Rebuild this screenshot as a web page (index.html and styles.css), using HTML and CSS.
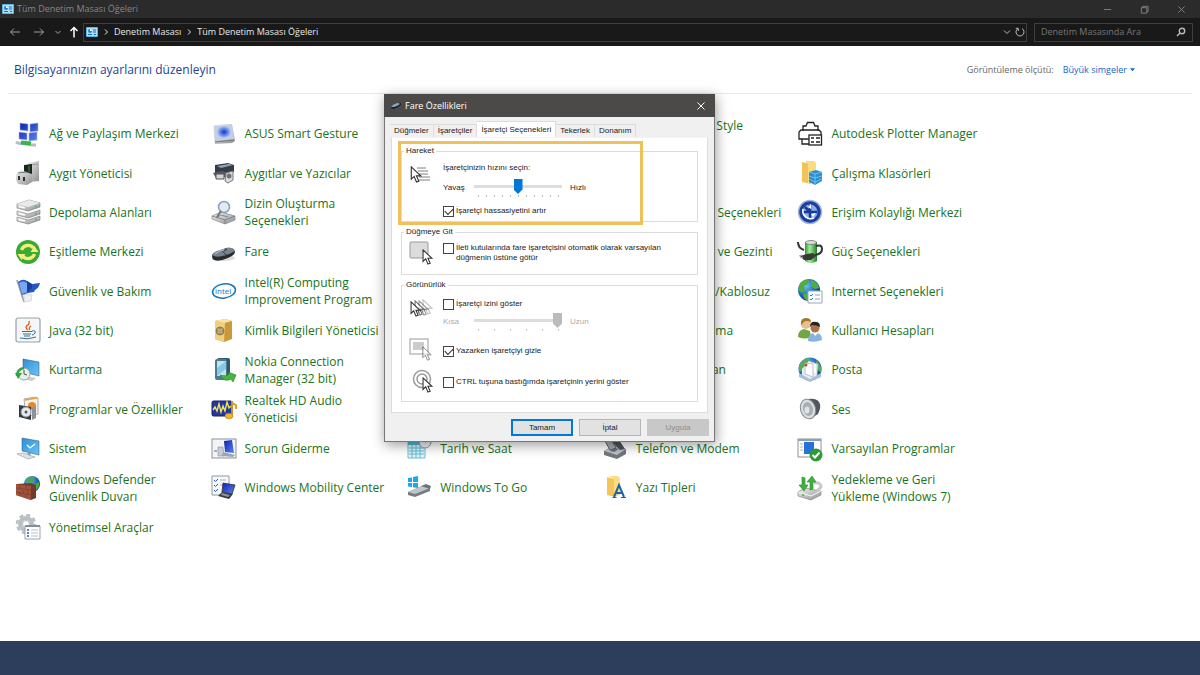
FILE: index.html
```html
<!DOCTYPE html>
<html lang="tr">
<head>
<meta charset="utf-8">
<meta name="viewport" content="width=device-width, initial-scale=1">
<title>Tüm Denetim Masası Öğeleri</title>
<link rel="stylesheet" href="styles.css">
</head>
<body>
<svg class="defs" aria-hidden="true">
  <defs>
    <linearGradient id="metal" x1="0" y1="0" x2="1" y2="1"><stop offset="0" stop-color="#f4f4f4"/><stop offset="1" stop-color="#8d8f92"/></linearGradient>
    <linearGradient id="screen" x1="0" y1="0" x2="1" y2="1"><stop offset="0" stop-color="#2d8fd8"/><stop offset="1" stop-color="#6cc5f5"/></linearGradient>
    <linearGradient id="navy" x1="0" y1="0" x2="1" y2="1"><stop offset="0" stop-color="#0a1fb0"/><stop offset="1" stop-color="#5d86ee"/></linearGradient>
    <radialGradient id="globe" cx=".35" cy=".3" r=".8"><stop offset="0" stop-color="#6fc3f5"/><stop offset=".6" stop-color="#1c62b8"/><stop offset="1" stop-color="#0b2c6e"/></radialGradient>
    <radialGradient id="glow"><stop offset="0" stop-color="#0b35d8"/><stop offset=".35" stop-color="#3f6ae4"/><stop offset="1" stop-color="#b9c8ea"/></radialGradient>
    <linearGradient id="leaf" x1="0" y1="0" x2="1" y2="0"><stop offset="0" stop-color="#2a9a32"/><stop offset=".4" stop-color="#a5ec9b"/><stop offset="1" stop-color="#1b7a26"/></linearGradient>
    <symbol id="panel" viewBox="0 0 12 10"><rect width="12" height="10" rx="1" fill="#5bb7ea"/><rect x="1" y="1" width="10" height="8" fill="#a9defa"/><circle cx="4" cy="4" r="2" fill="#2a7fc4"/><path d="M4 4V2a2 2 0 0 1 2 2z" fill="#fff"/><path d="M7 3h3M7 5h3M2 7.5h4M8 7.5h2" stroke="#1e6fb5"/></symbol>
    <symbol id="arrow" viewBox="0 0 12 18"><path d="M1 1v13l3-3 2.500 6 2.500-1-2.500-5.500H11z" fill="#fff" stroke="#333" stroke-width="1.200"/></symbol>
  </defs>
</svg>

<header class="chrome">
  <div class="titlebar">
    <svg class="panel-icon"><use href="#panel"/></svg>
    <h1>Tüm Denetim Masası Öğeleri</h1>
    <div class="caption-buttons">
      <button type="button" aria-label="Simge durumuna küçült"><svg viewBox="0 0 10 10"><path d="M1 5h8"/></svg></button>
      <button type="button" aria-label="Önceki boyut"><svg viewBox="0 0 10 10"><path d="M1.500 3h6v6h-6zM3 3V1.500h6v6H7.500"/></svg></button>
      <button type="button" aria-label="Kapat"><svg viewBox="0 0 10 10"><path d="M1.500 1.500l7 7M8.500 1.500l-7 7"/></svg></button>
    </div>
  </div>
  <nav class="navbar">
    <button class="nav-arrow" type="button" aria-label="Geri"><svg viewBox="0 0 12 12"><path d="M11 6H1.500M5 2.500L1.500 6 5 9.500"/></svg></button>
    <button class="nav-arrow" type="button" aria-label="İleri"><svg viewBox="0 0 12 12"><path d="M1 6h9.500M7 2.500L10.500 6 7 9.500"/></svg></button>
    <button class="nav-recent" type="button" aria-label="Son konumlar"><svg viewBox="0 0 8 8"><path d="M1.500 3L4 5.500 6.500 3"/></svg></button>
    <button class="nav-up" type="button" aria-label="Yukarı"><svg viewBox="0 0 12 12"><path d="M6 11.500V1.500M2.500 5L6 1.500 9.500 5"/></svg></button>
    <div class="address">
      <svg class="panel-icon"><use href="#panel"/></svg>
      <svg class="crumb" viewBox="0 0 6 8"><path d="M2 1.500L4.500 4 2 6.500"/></svg>
      <a href="#">Denetim Masası</a>
      <svg class="crumb" viewBox="0 0 6 8"><path d="M2 1.500L4.500 4 2 6.500"/></svg>
      <a href="#">Tüm Denetim Masası Öğeleri</a>
      <span class="address-tools">
        <button type="button" aria-label="Adres listesi"><svg viewBox="0 0 10 10"><path d="M2 3.500L5 6.500 8 3.500"/></svg></button>
        <button type="button" aria-label="Yenile"><svg viewBox="0 0 10 10"><path d="M7 1.500A4 4 0 1 1 3 1.500M3.300 4V1.300H.800"/></svg></button>
      </span>
    </div>
    <div class="search">
      <input type="text" aria-label="Denetim Masasında Ara" placeholder="Denetim Masasında Ara">
      <svg viewBox="0 0 10 10"><circle cx="6" cy="4" r="2.700"/><path d="M4 6L1 9"/></svg>
    </div>
  </nav>
</header>

<main>
  <div class="heading">
    <h2>Bilgisayarınızın ayarlarını düzenleyin</h2>
    <p>Görüntüleme ölçütü:</p>
    <button type="button">Büyük simgeler <svg viewBox="0 0 6 4"><path d="M0 0h6L3 3.500z"/></svg></button>
  </div>

  <ul class="items">
    <li><a href="#"><svg viewBox="0 0 26 26"><g fill="url(#navy)" stroke="#a9b8dd" stroke-width=".6"><path d="M5 2l8 1v7l-8-1zM15 3l8-1v8l-8 1zM4 11l8 1v7l-8-1zM14 12l8-1v8l-8 1z"/></g><path d="M1 21q3 2 7 1.500l9 1.500 4 0" stroke="#b9bec6" stroke-width="3" fill="none"/><path d="M6 21.500l10 1" stroke="#39b54a" stroke-width="4"/></svg><span>Ağ ve Paylaşım Merkezi</span></a></li>
    <li><a href="#"><svg viewBox="0 0 26 26"><path d="M2 4l19-1 3 17-3 2-17 1z" fill="url(#metal)"/><path d="M3 5l18-1 2 14-18 2z" fill="#c3cfe8"/><ellipse cx="13" cy="11" rx="7" ry="6" fill="url(#glow)"/><path d="M4 21l19-2" stroke="#777"/></svg><span>ASUS Smart Gesture</span></a></li>
    <li class="col-4"><a href="#"><span>Autodesk Plot Style Manager</span></a></li>
    <li><a href="#"><svg viewBox="0 0 26 26" fill="#fff" stroke="#222" stroke-width="1.300"><path d="M6 10V5h3l1.500-3.500h6L18 5h3v5M2 11l2-2h18l2 2v7H2zM5 18v5h8"/><rect x="12" y="14" width="12.500" height="10"/><path d="M14 17h3M19 17h4M14 21h3M19 21h4"/></svg><span>Autodesk Plotter Manager</span></a></li>

    <li><a href="#"><svg viewBox="0 0 26 26"><path d="M13 3l11-2v20l-9 1-4-5z" fill="url(#metal)"/><path d="M15 5l8-1" stroke="#999"/><path d="M9 5l8-1v10l-8 1z" fill="#1d2420"/><path d="M14 6v6" stroke="#3a9b55"/><path d="M1 14l5-4 5 2 6 2v8l-5 3-9-1-2-4z" fill="url(#metal)"/><path d="M4 16v4M9 17v4" stroke="#222" stroke-width="1.800"/><path d="M3 13l9-1" stroke="#777"/></svg><span>Aygıt Yöneticisi</span></a></li>
    <li><a href="#"><svg viewBox="0 0 26 26"><path d="M4 5l13-2 6 2v7l-15 3-4-2z" fill="#363c43"/><path d="M6 6l12-2 4 1-12 3z" fill="#8fa2b5"/><path d="M2 13l9-2 6 2-3 4-9 1z" fill="#555b62"/><path d="M5 14h8v5H5z" fill="#d4d7da" stroke="#555"/><path d="M15 13l7-2v9l-5 3-3-2z" fill="#dadcdf" stroke="#777"/><circle cx="18" cy="16" r="2.500" fill="#6d747c"/></svg><span>Aygıtlar ve Yazıcılar</span></a></li>
    <li class="col-5"><a href="#"><svg viewBox="0 0 26 26"><path d="M5 2l9 2v20l-9-2z" fill="#f0c45a"/><path d="M8 1h9l2 2v18l-8 2V4z" fill="#fbdc82"/><path d="M12 12l7-2 6 2v9l-7 4-6-3z" fill="#2b8fd0"/><path d="M12 12l6 2 7-2M18 14v11M12 16l6 2 7-2M12 19l6 3 7-3" stroke="#8fd0f4" stroke-width=".7" fill="none"/></svg><span>Çalışma Klasörleri</span></a></li>

    <li><a href="#"><svg viewBox="0 0 26 26"><path d="M2 5l12-4 11 3v4L13 12 2 9z" fill="url(#metal)" stroke="#777" stroke-width=".6"/><path d="M2 5l11 3 12-4-11-3z" fill="#e9e9e9"/><path d="M2 12l11 3 12-4v4l-12 4-11-3z" fill="url(#metal)" stroke="#777" stroke-width=".6"/><path d="M2 18l11 3 12-4v4l-12 4-11-3z" fill="url(#metal)" stroke="#777" stroke-width=".6"/><path d="M4 7.500l6 1.500M4 14.500l6 1.500M4 20.500l6 1.500" stroke="#fff" stroke-width="1.300"/><circle cx="21" cy="7.500" r="1" fill="#5bb85e"/><circle cx="21" cy="14.500" r="1" fill="#5bb85e"/><circle cx="21" cy="20.500" r="1" fill="#5bb85e"/></svg><span>Depolama Alanları</span></a></li>
    <li><a href="#"><svg viewBox="0 0 26 26"><path d="M1 17l9-4 14 4v4l-10 4L1 20z" fill="url(#metal)" stroke="#85888b" stroke-width=".7"/><path d="M1 17l13 4 10-4M14 21v4M5 19l5-3 7 2" stroke="#777" fill="none" stroke-width=".8"/><circle cx="13" cy="8" r="5.500" fill="#dcecf8" stroke="#8ba0b4" stroke-width="1.500"/><path d="M10 12l-4 6" stroke="#777" stroke-width="2"/></svg><span>Dizin Oluşturma Seçenekleri</span></a></li>
    <li class="col-4"><a href="#"><span>Dosya Gezgini Seçenekleri</span></a></li>
    <li><a href="#"><svg viewBox="0 0 26 26"><circle cx="13" cy="13" r="11.500" fill="#1b3f9f" stroke="#a4b6dc" stroke-width="1.500"/><circle cx="13" cy="13" r="7.500" fill="#8fb0ea"/><path d="M13 6v7h7M6 13h7v7M8 8l5 5" stroke="#173a94" stroke-width="2.500" fill="none"/><path d="M14 5l-3 3 3 2zM19 14l-3 4-2-3z" fill="#fff"/><path d="M6 10a8 8 0 0 0 11 9" stroke="#fff" stroke-width="1.600" fill="none"/></svg><span>Erişim Kolaylığı Merkezi</span></a></li>

    <li><a href="#"><svg viewBox="0 0 26 26"><circle cx="13" cy="13" r="12" fill="#39ab35"/><path d="M6.500 11a7 7 0 0 1 12-2M19.500 15a7 7 0 0 1-12 2" fill="none" stroke="#f4ee7c" stroke-width="3.400"/><path d="M15.500 12h8l-4-6zM10.500 14h-8l4 6z" fill="#f4ee7c" transform="translate(0 1)"/></svg><span>Eşitleme Merkezi</span></a></li>
    <li><a href="#"><svg viewBox="0 0 26 26"><ellipse cx="13" cy="19" rx="11" ry="3" fill="#ddd"/><path d="M1 17q0-3 7-5l7-3q8-1 9 4 0 3-7 6-9 4-14 2-2-1-2-4z" fill="#272c31"/><path d="M1 16q1-3 8-5l7-2q6-1 8 3-6 4-13 5-6 2-10-1z" fill="#778490"/><path d="M10 11q4 3 5 5M13 12l3-2" stroke="#2c3339" fill="none"/><path d="M4 15q5-4 9-4" stroke="#b9c4cd" fill="none"/></svg><span>Fare</span></a></li>
    <li class="col-4 tucked"><a href="#"><span>ve Gezinti</span></a></li>
    <li><a href="#"><svg viewBox="0 0 26 26"><path d="M8 3q6-3 12 0v19q-6 4-12 0z" fill="url(#leaf)"/><ellipse cx="14" cy="3.500" rx="5.500" ry="2" fill="#d9dbd9" stroke="#697169" stroke-width=".7"/><path d="M1 3q0 6 6 8M19 7q6-2 6 3t-7 6" stroke="#333" stroke-width="2" fill="none"/><path d="M3 17l7-2 6-1 3 3-5 4-7 0z" fill="#3b3838"/><path d="M3 19l3-1M2 17l3-1" stroke="#aaa"/></svg><span>Güç Seçenekleri</span></a></li>

    <li><a href="#"><svg viewBox="0 0 26 26"><path d="M2 2l7 22" stroke="#a2a6aa" stroke-width="1.800"/><path d="M9 16l8 1-1 6-7 1z" fill="#eff0f2" stroke="#c3c5c8" stroke-width=".6"/><path d="M3 4q5-4 9-1t5 3l8-1q-1 5-5 7l-1 2-6 1-6 2z" fill="#2459c4"/><path d="M4 5q4-3 8 0l1 9-6 2z" fill="#7da6f0"/><path d="M12 3v12l5-5V6z" fill="#173f9c"/></svg><span>Güvenlik ve Bakım</span></a></li>
    <li><a href="#"><svg viewBox="0 0 26 26"><ellipse cx="13" cy="13" rx="11.500" ry="7" transform="rotate(-8 13 13)" fill="#fff" stroke="#1675bd" stroke-width="1.500"/><text x="4" y="16" class="intel">intel</text></svg><span>Intel(R) Computing Improvement Program</span></a></li>
    <li class="col-4"><a href="#"><span>Intel® PROSet/Kablosuz</span></a></li>
    <li><a href="#"><svg viewBox="0 0 26 26"><circle cx="12" cy="12" r="11" fill="url(#globe)"/><path d="M3 5q5-4 9-3l-1 4-4 2 1 4-3 3-4-3zM14 2q7 1 8 8l-4 1-4-3zM6 16l5-1 2 4-2 4q-5-2-5-7z" fill="#4fae3e"/><path d="M11 13h14v12H11z" fill="#fff" stroke="#9aa6b2"/><path d="M13 17l1 1 2-2M13 21l1 1 2-2" stroke="#1d7bd0" fill="none"/><path d="M18 17h5M18 21h5" stroke="#8fa1b3"/></svg><span>Internet Seçenekleri</span></a></li>

    <li><a href="#"><svg viewBox="0 0 26 26"><rect x="1" y="1" width="24" height="24" rx="2" fill="#f5f6f7" stroke="#9aa1a8" stroke-width="1.200"/><path d="M13 13q-4-3 0-5 2-2 1-4M15 13q-2-2 1-4" stroke="#e8641b" stroke-width="1.400" fill="none"/><path d="M7 14.500h10M8 17h8M9 19h6M17 14q4-1 3 2-1 2-3 2M5 21q8 2 16-1" stroke="#3c6c97" stroke-width="1" fill="none"/></svg><span>Java (32 bit)</span></a></li>
    <li><a href="#"><svg viewBox="0 0 26 26"><path d="M4 4l10-2 7 2v18l-8 3-9-3z" fill="#c99a3c"/><path d="M4 4l10 2-1 19-9-3z" fill="#edcf7d"/><path d="M4 4l10-2 7 2-8 2z" fill="#f7e5a6"/><circle cx="9" cy="14" r="4" fill="#b6a069" stroke="#7b6733" stroke-width=".7"/><circle cx="9" cy="14" r="1.800" fill="#e9e6de"/><path d="M9 10v8M5 14h8" stroke="#7b6733" stroke-width=".6"/></svg><span>Kimlik Bilgileri Yöneticisi</span></a></li>
    <li class="col-4"><a href="#"><span>Konuşma Tanıma</span></a></li>
    <li><a href="#"><svg viewBox="0 0 26 26"><path d="M1 20q0-7 6-8l6 2 1 6q-6 3-13 0z" fill="#72a644"/><circle cx="9" cy="7" r="5" fill="#e9c08d"/><path d="M4 8q-1-7 5-7 5 0 5 4-5-2-7 0z" fill="#a7772f"/><path d="M11 24q0-7 5-8h5q4 2 4 7-7 3-14 1z" fill="#88b2df"/><path d="M16 16l2 3 3-3z" fill="#fff"/><circle cx="18" cy="11" r="4.500" fill="#ad7448"/><path d="M13 10q0-6 6-5 4 0 4 5-3-2-8-2z" fill="#2c2320"/></svg><span>Kullanıcı Hesapları</span></a></li>

    <li><a href="#"><svg viewBox="0 0 26 26"><path d="M8 2l16 3v14L8 15z" fill="url(#screen)" stroke="#37485a" stroke-width=".5"/><path d="M8 19l13 2-4 3-9-2z" fill="#c4cbd2"/><circle cx="9" cy="17" r="6" fill="#e8eeea" stroke="#9ba7a0"/><path d="M9 13v4l3 1" stroke="#555" fill="none"/><path d="M2 19q0-7 7-8" stroke="#2fa444" stroke-width="2.500" fill="none"/><path d="M0 16h7l-4 6z" fill="#2fa444"/></svg><span>Kurtarma</span></a></li>
    <li><a href="#"><svg viewBox="0 0 26 26"><rect x="6" y="1" width="13" height="22" rx="2" fill="#32596b"/><rect x="4" y="2" width="12" height="21" rx="2" fill="#507b8f"/><rect x="6" y="4" width="9" height="15" fill="#bde4f4"/><path d="M6 11l9-7v8l-9 7z" fill="#87c9e4"/><path d="M9 18q6 2 9-1l-1-2 8 3-3 7-2-3q-7 4-11-4z" fill="#48b63c" stroke="#27782a" stroke-width=".6"/></svg><span>Nokia Connection Manager (32 bit)</span></a></li>
    <li class="col-4"><a href="#"><span>Otomatik Kullan</span></a></li>
    <li><a href="#"><svg viewBox="0 0 26 26"><circle cx="13" cy="12" r="11.500" fill="url(#globe)"/><path d="M2 8q5-8 11-7l-3 5-4 7-4 2zM19 3q7 6 5 13l-4-4z" fill="#5aab58"/><path d="M5 12l7-8 9 3-1 12-6 6-9-4z" fill="#e8eef5"/><path d="M8 6l8 1v13l-8-3zM11 4l9 3v12" fill="#fff" stroke="#a4b5c8" stroke-width=".8"/><circle cx="9" cy="8" r="1.500" fill="#d44234"/><path d="M2 16l11 6 11-6v4l-11 5-11-5z" fill="#a8bfda"/></svg><span>Posta</span></a></li>

    <li><a href="#"><svg viewBox="0 0 26 26"><path d="M9 3l11-2 3 1v16l-12 3z" fill="#f5f2eb" stroke="#8f8b83" stroke-width=".7"/><path d="M10 4l12-2" stroke="#e3a442" stroke-width="1.500"/><circle cx="17" cy="10" r="4" fill="#e38a31"/><path d="M4 9l12 2v13L4 21z" fill="#34383d"/><circle cx="11" cy="16" r="5" fill="#e3e9ed" stroke="#8d98a2"/><circle cx="11" cy="16" r="1.500" fill="#555"/><path d="M17 12v12l4-2V10z" fill="#8c9299"/></svg><span>Programlar ve Özellikler</span></a></li>
    <li><a href="#"><svg viewBox="0 0 26 26"><rect x="1" y="5" width="20" height="15" rx="1.500" fill="#23389e" stroke="#142263"/><path d="M2 14l2-3 2 4 2-7 2 8 2-6 2 5 2-9 2 6 2-2" stroke="#f1e45c" stroke-width="1.400" fill="none"/><path d="M21 20V5q0 3 4 4v4" stroke="#d99a20" stroke-width="1.800" fill="none"/><ellipse cx="18" cy="20" rx="4" ry="2.700" fill="#f3b528" stroke="#bc7e11" stroke-width=".7"/></svg><span>Realtek HD Audio Yöneticisi</span></a></li>
    <li class="col-5"><a href="#"><svg viewBox="0 0 26 26"><path d="M11 3q8-1 11 3t-1 12l-8 5z" fill="#50565c"/><ellipse cx="11" cy="13" rx="7.500" ry="10" transform="rotate(-15 11 13)" fill="#dbdfe1" stroke="#868c91"/><ellipse cx="11" cy="13" rx="5" ry="7" transform="rotate(-15 11 13)" fill="#a7afb5"/><ellipse cx="10" cy="14" rx="2.500" ry="3.500" fill="#dfe3e5"/></svg><span>Ses</span></a></li>

    <li><a href="#"><svg viewBox="0 0 26 26"><path d="M7 2l17 3v14L7 15z" fill="url(#screen)" stroke="#344d66" stroke-width=".5"/><path d="M12 9l3 3 5-4" stroke="#fff" stroke-width="1.300" fill="none"/><path d="M14 17v4" stroke="#89949e" stroke-width="3"/><path d="M2 18l6-1 12 4-7 2z" fill="#dbe1e6" stroke="#9fa9b2" stroke-width=".7"/></svg><span>Sistem</span></a></li>
    <li><a href="#"><svg viewBox="0 0 26 26"><rect x="1" y="3" width="24" height="19" fill="#f2f4f6" stroke="#8b939b"/><path d="M13 5l8-1 2 13-9-1z" fill="url(#navy)"/><path d="M7 11h5l1 9H7z" fill="#c5ccd3" stroke="#868f98" stroke-width=".6"/><path d="M12 16l12 3-2 2-11-1z" fill="#9ba5af"/><path d="M3 15h3" stroke="#666"/></svg><span>Sorun Giderme</span></a></li>
    <li><a href="#"><svg viewBox="0 0 26 26"><path d="M2 6h17v16H2z" fill="#e3f6fb" stroke="#70bcd2"/><path d="M2 5h17v4H2z" fill="#4fb9d6"/><path d="M3 12h15M3 15h15M3 18h15M6 9v13M10 9v13M14 9v13" stroke="#5fbcd6" stroke-width="1"/><circle cx="19" cy="6" r="6" fill="#edf3f7" stroke="#8a98a5"/><path d="M19 3v3l3-1" stroke="#456" fill="none"/></svg><span>Tarih ve Saat</span></a></li>
    <li><a href="#"><svg viewBox="0 0 26 26"><path d="M2 15l10-6 12 4v5l-9 5-13-4z" fill="#71777c"/><path d="M2 15l10-6 12 4-9 6z" fill="#bcc1c5"/><path d="M7 3l8-2 8 12-5 1z" fill="#4c5359"/><path d="M8 15l5-3 4 1-5 3z" fill="#697178"/><path d="M3 5l6-2 5 9-6 2z" fill="#a6adb3" stroke="#596168"/></svg><span>Telefon ve Modem</span></a></li>
    <li><a href="#"><svg viewBox="0 0 26 26"><rect x="1" y="3" width="23" height="18" fill="#fff" stroke="#8b939b" stroke-width="1"/><path d="M1 4h23" stroke="#8ba1b5" stroke-width="2"/><path d="M7 6h10v12H7z" fill="#2673d6"/><path d="M3 8h3M3 11h3M3 14h3" stroke="#aab6c2"/><circle cx="19" cy="19" r="6.500" fill="#2d9b33"/><path d="M15.500 19l2.500 2.500 4.500-5" stroke="#fff" stroke-width="2" fill="none"/></svg><span>Varsayılan Programlar</span></a></li>

    <li><a href="#"><svg viewBox="0 0 26 26"><circle cx="17" cy="9" r="8" fill="url(#globe)"/><path d="M11 5q4-4 9-3l-2 5-5 1zM18 10l6-3q1 5-3 8z" fill="#4aa648"/><path d="M1 9l15-1 5 2v13l-5 2L1 20z" fill="#74392a"/><path d="M1 9l15 2v14L1 20z" fill="#a0533c"/><path d="M1 13l15 2M1 17l15 3M5 9v4M11 10v5M8 14v4M13 15v4M5 17v4M11 19v4" stroke="#7a3827" stroke-width=".6"/></svg><span>Windows Defender Güvenlik Duvarı</span></a></li>
    <li><a href="#"><svg viewBox="0 0 26 26"><path d="M1 1h17v19H1z" fill="#f6f9fc" stroke="#8c98a6"/><path d="M3 5l1.500 1.500L7 4M3 10l1.500 1.500L7 9M3 15l1.500 1.500L7 14" stroke="#2c58b8" fill="none"/><path d="M9 5h6M9 10h6" stroke="#9fb0c4"/><path d="M12 8l12 2-3 9-10-2z" fill="url(#navy)" stroke="#26303a" stroke-width=".8"/><path d="M11 17l11 2-4 5-11-3z" fill="#343b42"/><path d="M11 18l8 2-2 2-7-2z" fill="#89939d"/></svg><span>Windows Mobility Center</span></a></li>
    <li><a href="#"><svg viewBox="0 0 26 26"><path d="M2 3l4-.600V7H2zM7 2l5-1v6H7zM2 8h4v4l-4-.600zM7 8h5v5l-5-.800z" fill="#17a9ea"/><path d="M2 17l14-6 8 2v3L9 22l-7-2z" fill="#777d82"/><path d="M2 17l14-6 8 2-15 6z" fill="#c0c4c7"/><path d="M15 11l5-2 5 2-1 3z" fill="#6d7377"/></svg><span>Windows To Go</span></a></li>
    <li><a href="#"><svg viewBox="0 0 26 26"><path d="M5 2l8 2v18l-8-2z" fill="#f2c658"/><path d="M7 1h9l2 2v17l-6 2V4z" fill="#fbdd85"/><path d="M12 22l5-12 5 12M14 18h6" stroke="#1c63a8" stroke-width="2" fill="none"/><path d="M10.500 22.500h4M19 22.500h5" stroke="#1c63a8"/></svg><span>Yazı Tipleri</span></a></li>
    <li><a href="#"><svg viewBox="0 0 26 26"><path d="M1 17l7-4 16 3v4l-10 5L1 21z" fill="url(#metal)" stroke="#868a8d" stroke-width=".7"/><path d="M1 17l13 4 10-5" stroke="#f8f8f8" fill="none"/><path d="M17 8q7-1 7 4l-4 4" stroke="#c5c9cc" stroke-width="3" fill="none"/><path d="M5 2v8H2l5 6 4-6H8V3zM13 15V7h-3l5-6 4 6h-3v7z" fill="#3fb33d" stroke="#26852e" stroke-width=".6"/><circle cx="6" cy="20" r="1" fill="#3b4"/></svg><span>Yedekleme ve Geri Yükleme (Windows 7)</span></a></li>

    <li><a href="#"><svg viewBox="0 0 26 26"><circle cx="11" cy="10" r="6" fill="none" stroke="#b9c0c5" stroke-width="4"/><circle cx="11" cy="10" r="9" fill="none" stroke="#b9c0c5" stroke-width="2.500" stroke-dasharray="4 3.070"/><circle cx="11" cy="10" r="3.500" fill="#fff" stroke="#9ca4aa" stroke-width=".8"/><path d="M10 12h15v13H10z" fill="#fff" stroke="#9ba3aa"/><path d="M10 12h15" stroke="#848e97" stroke-width="2"/><path d="M12 16h2M12 19h2M12 22h2" stroke="#2a5bb0" stroke-width="1.500"/><path d="M16 16h7M16 19h7M16 22h7" stroke="#b5bfc8"/></svg><span>Yönetimsel Araçlar</span></a></li>
  </ul>
</main>

<footer class="taskbar"></footer>

<section class="dialog" role="dialog" aria-labelledby="dialog-title">
  <header class="dialog-title">
    <svg viewBox="0 0 12 10"><path d="M1 7q1-3 6-5 4-1 4 1t-5 4Q2 9 1 7z" fill="#17222b"/><path d="M1 6q2-3 6-4 3 0 3 1Q8 5 4 6z" fill="#8aa4b8"/></svg>
    <h2 id="dialog-title">Fare Özellikleri</h2>
    <button type="button" aria-label="Kapat"><svg viewBox="0 0 10 10"><path d="M1.500 1.500l7 7M8.500 1.500l-7 7"/></svg></button>
  </header>
  <div class="tabs" role="tablist">
    <button type="button" role="tab">Düğmeler</button>
    <button type="button" role="tab">İşaretçiler</button>
    <button type="button" role="tab" aria-selected="true">İşaretçi Seçenekleri</button>
    <button type="button" role="tab">Tekerlek</button>
    <button type="button" role="tab">Donanım</button>
  </div>
  <div class="sheet">
    <div class="highlight"></div>
    <fieldset class="motion">
      <legend>Hareket</legend>
      <div class="option">
        <svg class="picture" viewBox="0 0 24 24"><path d="M8 5h9M9 8h10M10 11h9M10 14h11M10 17h11" stroke="#aaa" stroke-width="1.300"/><use href="#arrow" x="1" y="3" width="12" height="17"/></svg>
        <div class="controls">
          <label for="speed">İşaretçinizin hızını seçin:</label>
          <div class="slider-row">
            <span>Yavaş</span>
            <span class="slider"><input id="speed" type="range" min="0" max="10" value="5"><i class="ticks ticks-11"></i></span>
            <span>Hızlı</span>
          </div>
          <label class="check"><input type="checkbox" checked><span>İşaretçi hassasiyetini artır</span></label>
        </div>
      </div>
    </fieldset>
    <fieldset class="snap">
      <legend>Düğmeye Git</legend>
      <div class="option">
        <svg class="picture" viewBox="0 0 24 24"><rect x="1" y="1" width="18" height="16" rx="1" fill="#dcdcdc" stroke="#999"/><use href="#arrow" x="13" y="8" width="11" height="16"/></svg>
        <div class="controls">
          <label class="check"><input type="checkbox"><span>İleti kutularında fare işaretçisini otomatik olarak varsayılan düğmenin üstüne götür</span></label>
        </div>
      </div>
    </fieldset>
    <fieldset class="visibility">
      <legend>Görünürlük</legend>
      <div class="option">
        <svg class="picture" viewBox="0 0 24 24"><g opacity=".3"><use href="#arrow" x="13" y="2" width="11" height="16"/></g><g opacity=".5"><use href="#arrow" x="9" y="3" width="11" height="16"/></g><g opacity=".7"><use href="#arrow" x="5" y="3" width="11" height="16"/></g><use href="#arrow" x="1" y="4" width="11" height="16"/></svg>
        <div class="controls">
          <label class="check"><input type="checkbox"><span>İşaretçi izini göster</span></label>
          <div class="slider-row off">
            <span>Kısa</span>
            <span class="slider"><input type="range" min="0" max="5" value="5" disabled aria-label="İz uzunluğu"><i class="ticks ticks-6"></i></span>
            <span>Uzun</span>
          </div>
        </div>
      </div>
      <div class="option">
        <svg class="picture" viewBox="0 0 24 24"><rect x="1" y="1" width="18" height="15" fill="#fff" stroke="#999"/><rect x="4" y="4" width="11" height="8" fill="#ccc"/><g opacity=".55"><use href="#arrow" x="13" y="8" width="10" height="15"/></g></svg>
        <div class="controls"><label class="check"><input type="checkbox" checked><span>Yazarken işaretçiyi gizle</span></label></div>
      </div>
      <div class="option">
        <svg class="picture" viewBox="0 0 24 24" fill="none"><circle cx="13" cy="10" r="8.500" stroke="#999" stroke-width="1.500"/><circle cx="13" cy="10" r="5" stroke="#999" stroke-width="1.500"/><use href="#arrow" x="13" y="8" width="11" height="16"/></svg>
        <div class="controls"><label class="check"><input type="checkbox"><span>CTRL tuşuna bastığımda işaretçinin yerini göster</span></label></div>
      </div>
    </fieldset>
  </div>
  <div class="actions">
    <button class="primary" type="button">Tamam</button>
    <button type="button">İptal</button>
    <button type="button" disabled>Uygula</button>
  </div>
</section>
</body>
</html>
```

FILE: styles.css
```css
* { box-sizing: border-box; }

body {
  position: relative;
  display: flex;
  flex-direction: column;
  min-height: 100vh;
  margin: 0;
  background: #fff;
  font: 12px/17px "Open Sans", "Noto Sans", sans-serif;
}

h1, h2, p, ul { margin: 0; padding: 0; font: inherit; }
button, input { margin: 0; padding: 0; border: 0; background: none; color: inherit; font: inherit; }
a { color: inherit; text-decoration: none; }
svg { display: block; flex: none; }
.defs { position: absolute; width: 0; height: 0; }

/* Window frame */
.chrome { color: #dedede; font-size: 9px; line-height: 14px; }
.chrome button svg, .crumb, .search svg { fill: none; stroke: currentColor; }
.panel-icon { width: 12px; height: 10px; }

.titlebar {
  display: flex;
  align-items: center;
  gap: 3px;
  height: 18px;
  padding-left: 2px;
  background: #2b2b2b;
  color: #858585;
}
.caption-buttons { display: flex; margin-left: auto; }
.caption-buttons button { display: grid; place-items: center; width: 37px; height: 18px; }
.caption-buttons svg { width: 9px; height: 9px; }

.navbar { display: flex; align-items: center; height: 28px; padding: 0 7px 0 9px; background: #191919; }
.navbar > button { display: grid; place-items: center; height: 18px; }
.nav-arrow { width: 24px; color: #a0a0a0; }
.nav-arrow:first-child { width: 12px; margin-right: 6px; }
.nav-arrow svg { width: 12px; height: 12px; }
.nav-recent { width: 14px; color: #a0a0a0; }
.nav-recent svg { width: 8px; height: 8px; }
.nav-up { width: 18px; color: #fff; }
.nav-up svg { width: 12px; height: 12px; stroke-width: 1.500; }

.address, .search { display: flex; align-items: center; height: 19px; border: 1px solid #3e3e3e; }
.address { flex: 1; gap: 5px; padding: 0 1px 0 2px; color: #e8e8e8; }
.crumb { width: 6px; height: 8px; }
.address-tools { display: flex; gap: 3px; margin-left: auto; color: #bbb; }
.address-tools svg { width: 10px; height: 10px; }
.search { width: 159px; margin-left: 7px; padding: 0 6px; color: #bbb; }
.search input { flex: 1; min-width: 0; outline: 0; }
.search input::placeholder { color: #777; opacity: 1; }
.search svg { width: 10px; height: 10px; stroke-width: 1.400; }

/* Control panel */
main { display: flex; flex: 1; flex-direction: column; }
.heading {
  display: flex;
  align-items: center;
  height: 48px;
  margin: 0 8px;
  padding: 0 57px 0 6px;
  border-bottom: 1px solid #e8e8e8;
  color: #666;
  font-size: 9px;
}
.heading h2 { margin-right: auto; color: #1e3f98; font-size: 12px; }
.heading button { display: flex; align-items: center; gap: 3px; margin-left: 9px; color: #1565c8; }
.heading button svg { width: 5px; height: 4px; fill: currentColor; }

.items {
  display: grid;
  flex: 1;
  grid-template-columns: repeat(5, 1fr);
  grid-template-rows: repeat(11, 1fr);
  padding: 20px 207px 94px 15px;
  color: #1a7320;
  font-size: 12px;
  list-style: none;
}
.items li { display: flex; align-items: center; min-height: 34px; }
.items a { display: flex; align-items: center; gap: 8px; }
.items a > svg { width: 26px; height: 26px; }
.items span { max-width: 147px; }
.col-4 { grid-column: 4; padding-left: 34px; }
.tucked { padding-left: 116px; }
.col-5 { grid-column: 5; }
.intel { fill: #1675bd; font: 8px "Open Sans", sans-serif; }

.taskbar { height: 34px; background: #2c3e5c; }

/* Mouse properties window */
.dialog {
  position: absolute;
  top: 94px;
  left: 384px;
  width: 331px;
  border: 1px solid #777;
  background: #f0f0f0;
  box-shadow: 1px 3px 12px rgba(0, 0, 0, .4);
  color: #222;
  font: 8px/10px "Liberation Sans", Arial, sans-serif;
}
.dialog-title {
  display: flex;
  align-items: center;
  gap: 3px;
  height: 23px;
  margin: -1px -1px 0;
  padding: 0 9px 0 6px;
  background: #4b4a48;
  color: #fff;
  font: 9px/14px "Open Sans", "Noto Sans", sans-serif;
}
.dialog-title > svg { width: 12px; height: 10px; }
.dialog-title button { margin-left: auto; }
.dialog-title button svg { width: 10px; height: 10px; fill: none; stroke: currentColor; }

.tabs { display: flex; align-items: flex-end; height: 20px; padding: 0 5px; }
.tabs button { height: 13px; padding: 0 4px; border: solid #dcdcdc; border-width: 1px 1px 0 0; white-space: nowrap; }
.tabs [aria-selected="true"] { height: 16px; background: #fff; }

.sheet { position: relative; margin: 0 6px; padding: 8px 9px 10px; border: 1px solid #dcdcdc; border-top-color: #f4f4f4; background: #fff; }
.highlight { position: absolute; top: 3px; left: 6px; width: 245px; height: 84px; border: 3px solid #efc15c; pointer-events: none; }
fieldset { min-width: 0; margin: 0; padding: 0 7px; border: 1px solid #dcdcdc; }
legend { margin-left: -5px; padding: 0 2px; }
.motion { height: 76px; margin-bottom: 5px; }
.snap { height: 48px; margin-bottom: 5px; }
.visibility { height: 122px; }

.option { display: flex; gap: 9px; }
.picture { width: 24px; height: 24px; }
.controls { flex: 1; min-width: 0; padding-left: 1px; }
.motion .option { padding-top: 7px; }
.snap .option { padding-top: 4px; }
.snap .controls { padding-top: 2px; }
.visibility .option { min-height: 31px; }
.visibility .option:nth-of-type(1) { min-height: 48px; padding-top: 7px; }
.visibility .option:nth-of-type(1) .controls { padding-top: 2px; }
.visibility .option:nth-of-type(n+2) .controls { padding-top: 8px; }

.check { display: flex; gap: 2px; }
.check span { max-width: 226px; }
.check input {
  appearance: none;
  flex: none;
  width: 11px;
  height: 11px;
  border: 1px solid #444;
  background: #fff;
}
.check input:checked::before {
  display: block;
  width: 7px;
  height: 4px;
  margin: 1px;
  border: solid #222;
  border-width: 0 0 1px 1px;
  content: "";
  transform: rotate(-45deg);
}

.slider-row { display: grid; grid-template-columns: 23px 88px auto; gap: 8px; align-items: start; height: 22px; margin-top: 3px; line-height: 18px; }
.motion .slider-row { height: 27px; margin-top: 6px; }
.slider { display: block; }
.slider input { display: block; appearance: none; width: 100%; height: 15px; background: linear-gradient(#ddd, #ddd) center / 100% 3px no-repeat; }
.slider input::-webkit-slider-thumb {
  appearance: none;
  width: 9px;
  height: 15px;
  background: #0078d7;
  clip-path: polygon(0 0, 100% 0, 100% 70%, 50% 100%, 0 70%);
}
.slider input:disabled::-webkit-slider-thumb { background: #bbb; }
.ticks { display: block; height: 2px; margin: 1px 3px 0 4px; }
.ticks-11 { background: repeating-linear-gradient(90deg, #bbb 0 1px, transparent 1px 8px); }
.ticks-6 { background: repeating-linear-gradient(90deg, #ccc 0 1px, transparent 1px 16px); }
.off { color: #aaa; }

.actions { display: flex; justify-content: flex-end; gap: 6px; padding: 6px 5px 5px; }
.actions button { width: 62px; height: 17px; border: 1px solid #b5b5b5; background: #e2e2e2; }
.actions .primary { border: 2px solid #0078d7; }
.actions button:disabled { border-color: #c8c8c8; background: #c8c8c8; color: #8d8d8d; }
```
